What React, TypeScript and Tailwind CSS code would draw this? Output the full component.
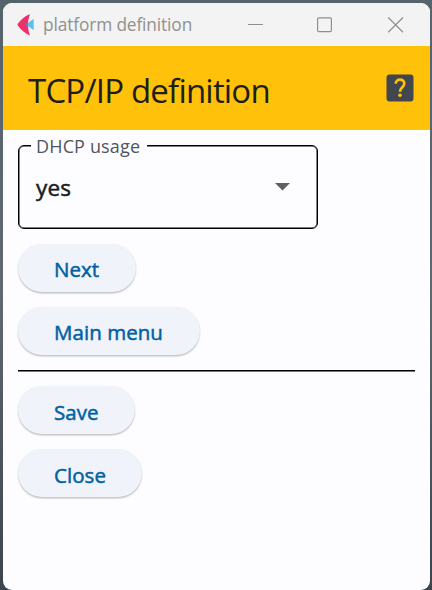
import React from "react";

function FishLogo() {
  return (
    <svg className="block h-[22px] w-[18px]" viewBox="0 0 18 22">
      <path d="M12 .4C12.8 .2 13 .8 12.5 1.8C11.4 4.8 11 7.5 11 10.6C11 14 11.4 17 12.5 20C13 21 12.6 21.5 11.7 20.9C7.8 18.8 3.6 15.5.8 11.4C.4 10.8.4 10.4.8 9.8C3.8 5.6 8 1.8 12 .4Z" fill="#f0306b" />
      <path d="M9 10.6L15.7 5.5C16.3 5.1 16.7 5.4 16.7 6V15.2C16.7 15.9 16.3 16 15.7 15.6Z" fill="#5bc0ea" />
      <path d="M8.8 10.6L11 9V12.2Z" fill="#4b8fd8" />
    </svg>
  );
}

function TitleBar() {
  return (
    <header className="flex h-[43px] shrink-0 items-center bg-[#f3f3f3] pl-[14px] pr-[26px] text-[#909090]">
      <FishLogo />
      <span className="ml-2 w-[150px] whitespace-nowrap text-[17.3px] leading-6 tracking-[-0.12px]">platform definition</span>
      <svg className="ml-auto block h-4 w-[156px]" viewBox="0 0 156 16" fill="none" stroke="#8f8f8f" strokeWidth="1.2">
        <path d="M0 7.5H15" />
        <rect x="69.6" y=".8" width="13.8" height="13.8" rx="1.2" />
        <path d="M140.2.5L155 15.2M155 .5L140.2 15.2" />
      </svg>
    </header>
  );
}

function PillButton({ label, size }: { label: string; size: string }) {
  return (
    <button className={`flex h-12 items-center rounded-full bg-[#f0f3fa] pl-9 text-left text-[20.5px] leading-6 tracking-[0.05px] text-[#0061a4] shadow-[0_1.5px_1.5px_rgba(0,0,0,0.22),0_0_1px_rgba(0,0,0,0.08)] [-webkit-text-stroke:0.5px_#0061a4] ${size}`}>
      <span className="whitespace-nowrap">{label}</span>
    </button>
  );
}

export default function App() {
  return (
    <div className="h-[590px] w-[432px] bg-gradient-to-b from-[#55636b] via-[#606870] to-[#3c444d] pl-[3px] pr-[2px] pt-[3px] font-['Open_Sans','Noto_Sans',sans-serif]">
      <main className="flex h-[587px] flex-col overflow-hidden rounded-[9px] bg-[#fdfdff]">
        <TitleBar />
        <div className="flex h-[84px] shrink-0 items-center justify-between bg-[#ffc109] pl-[25px] pr-4">
          <h1 className="whitespace-nowrap pt-[5px] text-[33px] font-normal leading-10 tracking-[-0.8px] text-[#1d1d1d]">TCP/IP definition</h1>
          <svg className="block h-7 w-7" viewBox="0 0 28 28">
            <rect x=".5" y=".5" width="27" height="27" rx="3" fill="#42474e" />
            <path d="M9.7 9.8C9.7 4.3 18.3 4.3 18.3 9.6C18.3 13.2 14 13.3 14 17.8" fill="none" stroke="#ffc109" strokeWidth="2.6" />
            <circle cx="14" cy="21.3" r="1.8" fill="#ffc109" />
          </svg>
        </div>
        <section className="flex flex-col items-start px-[15px] pt-[15px]">
          <div className="relative flex h-[84px] w-[300px] items-center justify-between rounded-[6px] border border-black pl-[17px] pr-[27px] shadow-[inset_0_0_0_0.5px_#000]">
            <label className="absolute left-[12px] top-[-12px] w-[116px] whitespace-nowrap bg-[#fdfdff] pl-[5px] text-[18px] leading-6 tracking-[0.15px] text-[#50555d]">DHCP usage</label>
            <span className="pt-[2px] text-[22.5px] leading-8 tracking-[0.2px] text-[#1a1c1e] [-webkit-text-stroke:0.5px_#1a1c1e]">yes</span>
            <svg className="block h-[7.5px] w-[15px]" viewBox="0 0 15 7.5"><path d="M0 0H15L7.5 7.5Z" fill="#606060" /></svg>
          </div>
          <div className="mt-[15px] flex flex-col gap-[15px]">
            <PillButton label="Next" size="w-[118px] pt-[2px]" />
            <PillButton label="Main menu" size="w-[182px] pt-[2px]" />
          </div>
          <div className="mt-[15px] h-[2px] w-[397px] border-b border-[#777] bg-black" />
          <div className="mt-[14px] flex flex-col gap-[15px]">
            <PillButton label="Save" size="w-[117px] pt-1" />
            <PillButton label="Close" size="w-[124px] pt-1" />
          </div>
        </section>
      </main>
    </div>
  );
}
